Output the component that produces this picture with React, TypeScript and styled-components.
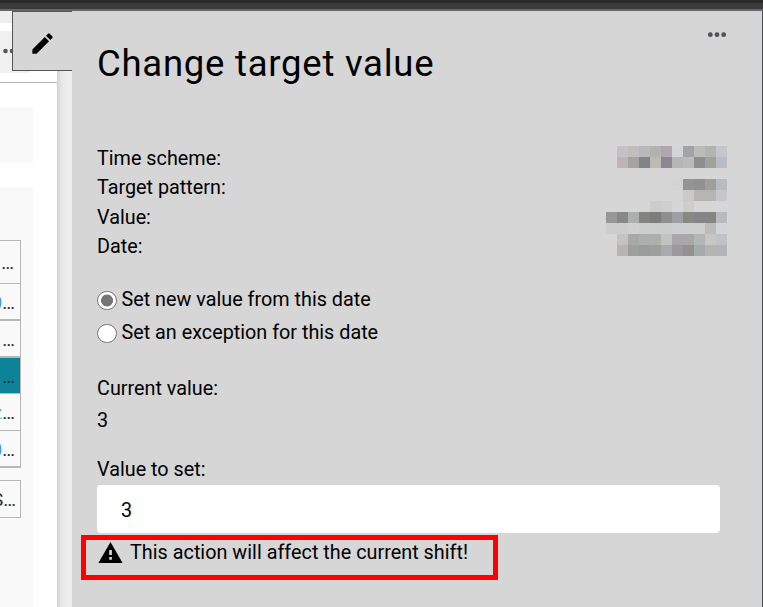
import React from "react";
import styled, { createGlobalStyle } from "styled-components";

const Global = createGlobalStyle`
  * { box-sizing: border-box; }
  body { margin: 0; overflow: hidden; background: #eee; font-family: Roboto, "Liberation Sans", sans-serif; color: #000; }
`;

const Page = styled.div`
  width: 763px;
  height: 607px;
  display: flex;
  flex-direction: column;
  overflow: hidden;
`;

const TopBar = styled.div`
  height: 11px;
  flex: none;
  background: linear-gradient(#2a2a2a 0 3px, #3b3b3b 3px 9px, #666 9px 11px);
`;

const Content = styled.div`
  flex: 1;
  min-height: 0;
  display: flex;
  position: relative;
`;

const Backdrop = styled.div`
  width: 72px;
  flex: none;
  padding-top: 12px;
  display: flex;
  background: #eee;
`;

const Sheet = styled.div`
  width: 57px;
  flex: none;
  background: #fff;
  padding-top: 8px;
  overflow: hidden;
`;

const Gutter = styled.div`
  flex: 1;
  background: linear-gradient(90deg, #cfcfcf, #e1e1e1 3px, #ebebeb 7px, #eee 11px);
`;

const SheetHeader = styled.div`
  height: 52px;
  border-bottom: 1px solid #b5b5b5;
`;

const SheetMenu = styled.div`
  width: 30px;
  height: 42px;
  background: #f1f1f1;
  display: flex;
  align-items: center;
  padding: 0 0 2px 3px;
`;

const Card = styled.div<{ $h: number; $gap: number; $inset?: number }>`
  width: 33px;
  height: ${(p) => p.$h}px;
  margin-top: ${(p) => p.$gap}px;
  padding-top: ${(p) => p.$inset ?? 0}px;
  background: #f9f9f9;
`;

const List = styled.div<{ $gap: number }>`
  width: 21px;
  margin-top: ${(p) => p.$gap}px;
  border: solid #b7b7b7;
  border-width: 1px 1px 0 0;
`;

const ListRow = styled.div<{ $h: number; $line: number; $active?: boolean; $right?: number; $bottom?: number }>`
  height: ${(p) => p.$h}px;
  border-bottom: ${(p) => p.$line}px solid #b7b7b7;
  background: ${(p) => (p.$active ? "#0c8399" : "transparent")};
  color: #282936;
  font-size: 19px;
  line-height: 20px;
  display: flex;
  justify-content: flex-end;
  align-items: flex-end;
  padding: 0 ${(p) => p.$right ?? 5}px ${(p) => p.$bottom ?? 5}px 0;
  overflow: hidden;
  white-space: nowrap;
`;

const Clipped = styled.span<{ $color: string }>`
  color: ${(p) => p.$color};
`;

const EditTab = styled.button`
  position: absolute;
  left: 12px;
  top: 0;
  width: 60px;
  height: 60px;
  padding: 4px 0 0 16px;
  border: solid #555;
  border-width: 1px 0 1px 1px;
  background: #d6d6d6;
  display: flex;
  align-items: center;
`;

const Panel = styled.main`
  flex: 1;
  background: #d6d6d6;
  border-right: 1px solid #4c4c54;
  padding: 0 35px 0 25px;
  display: flex;
  flex-direction: column;
  font-size: 19.8px;
  line-height: 24px;
`;

const PanelTop = styled.div`
  height: 132px;
  flex: none;
  display: flex;
  justify-content: space-between;
  align-items: flex-start;
`;

const Title = styled.h1`
  margin: 30px 0 0;
  font-size: 36.5px;
  line-height: 46px;
  font-weight: 400;
  letter-spacing: 0.75px;
`;

const MenuIcon = styled.svg`
  margin-top: 20px;
`;

const Details = styled.section`
  height: 122px;
  flex: none;
  display: flex;
  justify-content: space-between;
`;

const Labels = styled.div`
  display: flex;
  flex-direction: column;
  padding-top: 1px;
  line-height: 29.3px;
`;

const Mosaic = styled.div`
  display: grid;
  grid-template-columns: repeat(11, 11px);
  grid-auto-rows: 11px;
  align-content: start;
  padding-top: 3px;
`;

const Tile = styled.i<{ $c: string }>`
  background: ${(p) => p.$c};
`;

const Options = styled.div`
  margin-top: 18px;
  display: flex;
  flex-direction: column;
`;

const Option = styled.label`
  height: 33px;
  display: flex;
  align-items: center;
  gap: 5px;
  white-space: nowrap;
`;

const Radio = styled.span<{ $on?: boolean }>`
  width: 19.5px;
  height: 19.5px;
  margin-top: 2px;
  border: 1.5px solid #767676;
  border-radius: 50%;
  background: ${(p) => (p.$on ? "radial-gradient(circle, #767676 5.7px, #fff 6.3px)" : "#fff")};
`;

const Field = styled.div<{ $gap: number; $line: number }>`
  margin-top: ${(p) => p.$gap}px;
  line-height: ${(p) => p.$line}px;
`;

const ValueBox = styled.div`
  width: 623px;
  height: 48px;
  margin-top: 3px;
  flex: none;
  padding: 4px 24px 0;
  background: #fff;
  border-radius: 4px;
  display: flex;
  align-items: center;
`;

const Warning = styled.div`
  width: 417px;
  height: 45px;
  flex: none;
  margin: 2px 0 0 -16px;
  border: 5px solid #f00;
  padding: 0 0 0 12px;
  display: flex;
  align-items: flex-start;
  gap: 7px;
  line-height: 26px;
  letter-spacing: 0.02px;
  white-space: nowrap;
`;

const WarningIcon = styled.svg`
  margin-top: 1px;
`;

const _ = "transparent";
const tiles = [
  [_, "#c4c1c6", "#c0bebb", "#b5b9b7", "#b3b3ae", "#afa6b0", "#d1d5d5", "#a1a3a5", "#bbbbb9", "#b3b3af", "#c4c7ca"],
  [_, "#bbb5b7", "#a4a4a2", "#818488", "#bbbab3", "#8b8694", "#b2b6b5", "#bbbab9", "#8d8e8e", "#a1a19b", "#b8bdc5"],
  [_, _, _, _, _, _, _, _, _, _, _],
  [_, _, _, _, _, _, "#d5d2d0", "#949494", "#919191", "#9f9f99", "#b8bcc0"],
  [_, _, _, _, _, _, _, "#c9c9c9", "#b6b5b4", "#b5b4b3", "#c5c7ca"],
  [_, _, _, _, "#cccccc", "#cfcfcf", _, "#cdcdcd", _, _, _],
  ["#979797", "#888888", "#adafaf", "#838383", "#7f7d7a", "#8e8e8d", "#9ca0a5", "#898981", "#858489", "#868680", "#b8babd"],
  ["#cdcdcd", "#cdcdcd", "#d1d1d1", "#cdcdcd", "#cccccc", "#cccccc", "#ccced0", "#cecece", "#cecece", "#bbbbbb", "#d3d4d7"],
  [_, "#c4c3c1", "#a8a8a8", "#acaeac", "#adaeae", "#c1c3c2", "#a8a6a8", "#a7a8a8", "#b3b6b5", "#c8c6c1", "#bfc2c7"],
  [_, "#b6b5b2", "#9c9f9e", "#9a9b9b", "#9e9e9e", "#a8aaad", "#9b999d", "#94918e", "#a2acaa", "#b6b4af", "#b2b4ba"],
];

export default function App() {
  return (
    <Page>
      <Global />
      <TopBar />
      <Content>
        <Backdrop>
          <Sheet>
            <SheetHeader>
              <SheetMenu>
                <svg width="20" height="6" fill="#555">
                  <circle cx="2.5" cy="3" r="2.3" />
                  <circle cx="9" cy="3" r="2.3" />
                </svg>
              </SheetMenu>
            </SheetHeader>
            <Card $h={56} $gap={24} />
            <Card $h={420} $gap={24} $inset={53}>
              <List $gap={0}>
                <ListRow $h={43} $line={1} $right={6} $bottom={10}>…</ListRow>
                <ListRow $h={37} $line={2} $bottom={6}><Clipped $color="#4a94dc">0</Clipped>…</ListRow>
                <ListRow $h={37} $line={2} $bottom={6}>…</ListRow>
                <ListRow $h={36} $line={1} $active $bottom={6}>…</ListRow>
                <ListRow $h={37} $line={1} $bottom={7}><Clipped $color="#69bddf">z</Clipped>…</ListRow>
                <ListRow $h={37} $line={2} $bottom={6}><Clipped $color="#4a94dc">0</Clipped>…</ListRow>
              </List>
              <List $gap={12}>
                <ListRow $h={37} $line={1} $right={4} $bottom={7}>S…</ListRow>
              </List>
            </Card>
          </Sheet>
          <Gutter />
        </Backdrop>
        <Panel>
          <PanelTop>
            <Title>Change target value</Title>
            <MenuIcon width="20" height="8" fill="#50515a">
              <circle cx="3.3" cy="3.7" r="2.4" />
              <circle cx="10" cy="3.7" r="2.4" />
              <circle cx="16.7" cy="3.7" r="2.4" />
            </MenuIcon>
          </PanelTop>
          <Details>
            <Labels>
              <span>Time scheme:</span>
              <span>Target pattern:</span>
              <span>Value:</span>
              <span>Date:</span>
            </Labels>
            <Mosaic>
              {tiles.flatMap((row, y) => row.map((c, x) => <Tile key={`${y}-${x}`} $c={c} />))}
            </Mosaic>
          </Details>
          <Options>
            <Option><Radio $on />Set new value from this date</Option>
            <Option><Radio />Set an exception for this date</Option>
          </Options>
          <Field $gap={28} $line={24}>Current value:</Field>
          <Field $gap={8} $line={24}>3</Field>
          <Field $gap={25} $line={24}>Value to set:</Field>
          <ValueBox>3</ValueBox>
          <Warning>
            <WarningIcon width="25" height="23" viewBox="0 0 25 23">
              <path d="M12.5 1 24.6 22H.4Z" />
              <path d="M11.2 9h2.7v5h-2.7zM11.2 16h2.7v2.7h-2.7z" fill="#d6d6d6" />
            </WarningIcon>
            This action will affect the current shift!
          </Warning>
        </Panel>
        <EditTab aria-label="Edit">
          <svg width="27" height="27" viewBox="0 0 24 24">
            <path d="M3 17.25V21h3.75L17.81 9.94l-3.75-3.75L3 17.25zM20.71 7.04a1 1 0 0 0 0-1.41l-2.34-2.34a1 1 0 0 0-1.41 0l-1.83 1.83 3.75 3.75 1.83-1.83z" />
          </svg>
        </EditTab>
      </Content>
    </Page>
  );
}
